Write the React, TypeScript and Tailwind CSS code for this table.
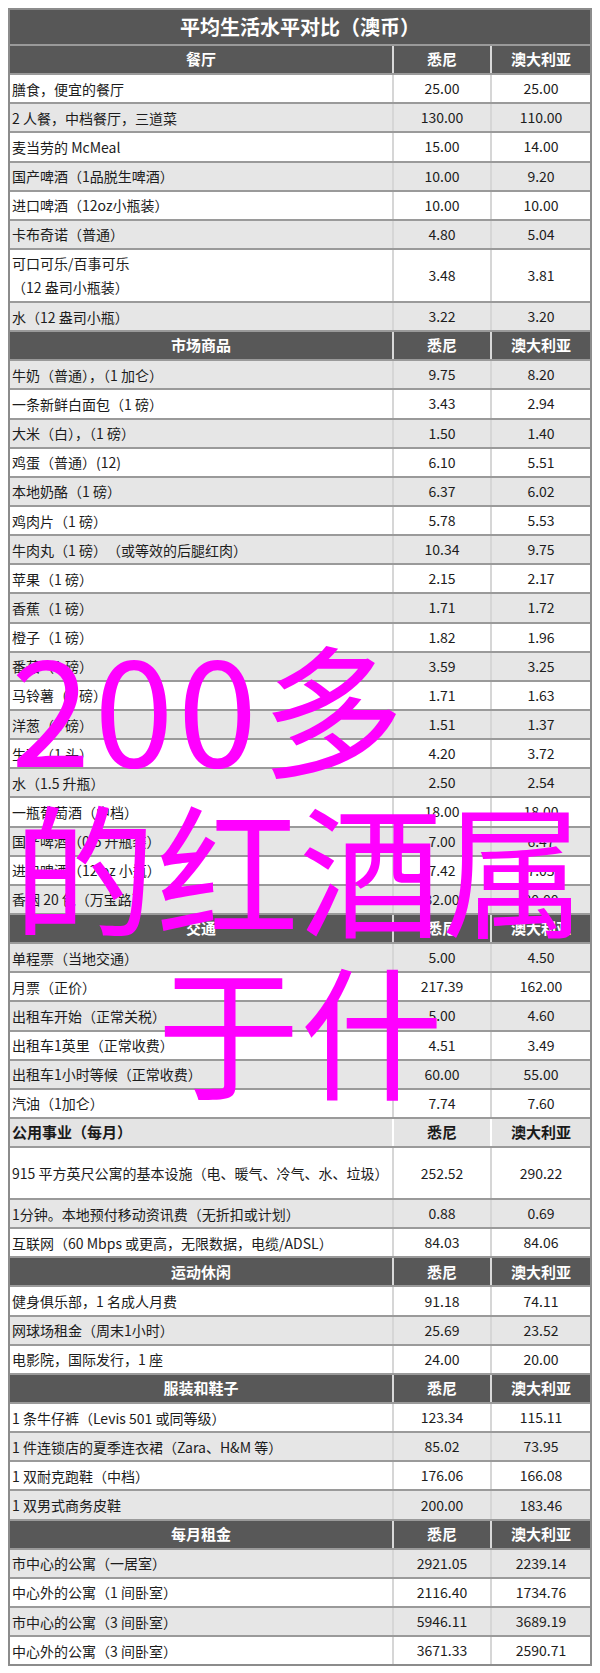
import React from 'react'

type Item = {
  name: string[]
  a: string
  b: string
  gray?: boolean
  size?: 'double' | 'tall'
}

type Section = {
  title: string
  light?: boolean
  rows: Item[]
}

const sections: Section[] = [
  {
    title: '餐厅',
    rows: [
      { name: ['膳食，便宜的餐厅'], a: '25.00', b: '25.00' },
      { name: ['2 人餐，中档餐厅，三道菜'], a: '130.00', b: '110.00', gray: true },
      { name: ['麦当劳的 McMeal'], a: '15.00', b: '14.00' },
      { name: ['国产啤酒（1品脱生啤酒）'], a: '10.00', b: '9.20', gray: true },
      { name: ['进口啤酒（12oz小瓶装）'], a: '10.00', b: '10.00' },
      { name: ['卡布奇诺（普通）'], a: '4.80', b: '5.04', gray: true },
      { name: ['可口可乐/百事可乐', '（12 盎司小瓶装）'], a: '3.48', b: '3.81', size: 'double' },
      { name: ['水（12 盎司小瓶）'], a: '3.22', b: '3.20', gray: true },
    ],
  },
  {
    title: '市场商品',
    rows: [
      { name: ['牛奶（普通），（1 加仑）'], a: '9.75', b: '8.20', gray: true },
      { name: ['一条新鲜白面包（1 磅）'], a: '3.43', b: '2.94' },
      { name: ['大米（白），（1 磅）'], a: '1.50', b: '1.40', gray: true },
      { name: ['鸡蛋（普通）(12)'], a: '6.10', b: '5.51' },
      { name: ['本地奶酪（1 磅）'], a: '6.37', b: '6.02', gray: true },
      { name: ['鸡肉片（1 磅）'], a: '5.78', b: '5.53' },
      { name: ['牛肉丸（1 磅）　（或等效的后腿红肉）'], a: '10.34', b: '9.75', gray: true },
      { name: ['苹果（1 磅）'], a: '2.15', b: '2.17' },
      { name: ['香蕉（1 磅）'], a: '1.71', b: '1.72', gray: true },
      { name: ['橙子（1 磅）'], a: '1.82', b: '1.96' },
      { name: ['番茄（1 磅）'], a: '3.59', b: '3.25', gray: true },
      { name: ['马铃薯（1 磅）'], a: '1.71', b: '1.63' },
      { name: ['洋葱（1 磅）'], a: '1.51', b: '1.37', gray: true },
      { name: ['生菜（1 头）'], a: '4.20', b: '3.72' },
      { name: ['水（1.5 升瓶）'], a: '2.50', b: '2.54', gray: true },
      { name: ['一瓶葡萄酒（中档）'], a: '18.00', b: '18.00' },
      { name: ['国产啤酒（0.5 升瓶装）'], a: '7.00', b: '6.47', gray: true },
      { name: ['进口啤酒（12 oz 小瓶）'], a: '7.42', b: '7.05' },
      { name: ['香烟 20 包（万宝路）'], a: '32.00', b: '30.00', gray: true },
    ],
  },
  {
    title: '交通',
    rows: [
      { name: ['单程票（当地交通）'], a: '5.00', b: '4.50', gray: true },
      { name: ['月票（正价）'], a: '217.39', b: '162.00' },
      { name: ['出租车开始（正常关税）'], a: '5.00', b: '4.60', gray: true },
      { name: ['出租车1英里（正常收费）'], a: '4.51', b: '3.49' },
      { name: ['出租车1小时等候（正常收费）'], a: '60.00', b: '55.00', gray: true },
      { name: ['汽油（1加仑）'], a: '7.74', b: '7.60' },
    ],
  },
  {
    title: '公用事业（每月）',
    light: true,
    rows: [
      { name: ['915 平方英尺公寓的基本设施（电、暖气、冷气、水、垃圾）'], a: '252.52', b: '290.22', size: 'tall' },
      { name: ['1分钟。本地预付移动资讯费（无折扣或计划）'], a: '0.88', b: '0.69', gray: true },
      { name: ['互联网（60 Mbps 或更高，无限数据，电缆/ADSL）'], a: '84.03', b: '84.06' },
    ],
  },
  {
    title: '运动休闲',
    rows: [
      { name: ['健身俱乐部，1 名成人月费'], a: '91.18', b: '74.11' },
      { name: ['网球场租金（周末1小时）'], a: '25.69', b: '23.52', gray: true },
      { name: ['电影院，国际发行，1 座'], a: '24.00', b: '20.00' },
    ],
  },
  {
    title: '服装和鞋子',
    rows: [
      { name: ['1 条牛仔裤（Levis 501 或同等级）'], a: '123.34', b: '115.11' },
      { name: ['1 件连锁店的夏季连衣裙（Zara、H&M 等）'], a: '85.02', b: '73.95', gray: true },
      { name: ['1 双耐克跑鞋（中档）'], a: '176.06', b: '166.08' },
      { name: ['1 双男式商务皮鞋'], a: '200.00', b: '183.46', gray: true },
    ],
  },
  {
    title: '每月租金',
    rows: [
      { name: ['市中心的公寓（一居室）'], a: '2921.05', b: '2239.14', gray: true },
      { name: ['中心外的公寓（1 间卧室）'], a: '2116.40', b: '1734.76' },
      { name: ['市中心的公寓（3 间卧室）'], a: '5946.11', b: '3689.19', gray: true },
      { name: ['中心外的公寓（3 间卧室）'], a: '3671.33', b: '2590.71' },
    ],
  },
]

function HeaderRow({ title, light }: { title: string; light?: boolean }) {
  if (light) {
    return (
      <div className="flex h-[29.15px] border-t-2 border-[#9a9a9a] bg-[#e4e4e4] text-[15px] font-bold text-[#1a1a1a]">
        <div className="flex w-[382px] items-center pl-[2px]">{title}</div>
        <div className="flex w-[98px] items-center justify-center border-l-2 border-white">悉尼</div>
        <div className="flex flex-1 items-center justify-center border-l-2 border-white">澳大利亚</div>
      </div>
    )
  }
  return (
    <div className="flex h-[29.15px] border-t-2 border-[#9a9a9a] bg-[#585858] text-[15px] font-bold text-white">
      <div className="flex w-[382px] items-center justify-center">{title}</div>
      <div className="flex w-[98px] items-center justify-center border-l-2 border-[#d9d9d9]">悉尼</div>
      <div className="flex flex-1 items-center justify-center border-l-2 border-[#d9d9d9]">澳大利亚</div>
    </div>
  )
}

function DataRow({ item }: { item: Item }) {
  const height =
    item.size === 'double' ? 'h-[53px]' : item.size === 'tall' ? 'h-[52px]' : 'h-[29.15px]'
  return (
    <div
      className={`flex ${height} border-t-2 border-[#9a9a9a] text-[14px] text-[#1c1c1c] ${
        item.gray ? 'bg-[#e6e6e6]' : 'bg-white'
      }`}
    >
      <div className="flex w-[382px] flex-col justify-center pl-[2px] leading-[24px]">
        {item.name.map((line) => (
          <span key={line}>{line}</span>
        ))}
      </div>
      <div className="flex w-[98px] items-center justify-center border-l-2 border-[#d6d6d6]">{item.a}</div>
      <div className="flex flex-1 items-center justify-center border-l-2 border-[#d6d6d6]">{item.b}</div>
    </div>
  )
}

export default function App() {
  return (
    <div className="relative h-[1673px] w-[600px] overflow-hidden bg-white font-['Noto_Sans_CJK_SC','Noto_Sans',sans-serif]">
      <div className="mx-[8px] mt-[8px] border-2 border-t-0 border-[#8c8c8c]">
        <div className="flex h-[36px] items-center justify-center border-t-2 border-[#8c8c8c] bg-[#575757] text-[20px] font-bold text-white">
          平均生活水平对比（澳币）
        </div>
        {sections.map((section) => (
          <div key={section.title}>
            <HeaderRow title={section.title} light={section.light} />
            {section.rows.map((item) => (
              <DataRow key={item.name.join('')} item={item} />
            ))}
          </div>
        ))}
      </div>

      {/* magenta overlay text */}
      <div className="pointer-events-none absolute left-0 top-0 text-[143px] leading-[150px] text-[#ff00ff]">
        <div className="absolute left-[11px] top-[630px] whitespace-nowrap tracking-[4px]">200多</div>
        <div className="absolute left-[13px] top-[790px] whitespace-nowrap">的红酒属</div>
        <div className="absolute left-[157px] top-[952px] whitespace-nowrap">于什</div>
      </div>
    </div>
  )
}
